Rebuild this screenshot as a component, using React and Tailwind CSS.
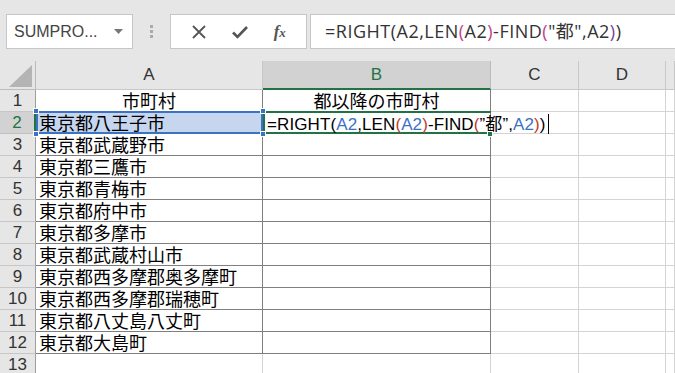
import React from "react";

const data = [
  "東京都八王子市",
  "東京都武蔵野市",
  "東京都三鷹市",
  "東京都青梅市",
  "東京都府中市",
  "東京都多摩市",
  "東京都武蔵村山市",
  "東京都西多摩郡奥多摩町",
  "東京都西多摩郡瑞穂町",
  "東京都八丈島八丈町",
  "東京都大島町",
];

const cellFont = { fontFamily: '"Noto Sans CJK JP", "Noto Sans", sans-serif' };
const uiFont = { fontFamily: '"Liberation Sans", Arial, sans-serif' };

function Toolbar() {
  return (
    <div className="h-[61px] bg-[#e6e6e6] flex items-start pt-[14px] pl-[6px]">
      <div className="w-[127px] h-[35px] bg-white border border-[#c6c6c6] flex items-center justify-between pl-[7px] pr-[9px]">
        <span className="text-[16px] text-[#444]" style={uiFont}>SUMPRO...</span>
        <svg width="9" height="5" viewBox="0 0 9 5"><path d="M0 0h9L4.5 5z" fill="#777" /></svg>
      </div>
      <div className="w-[37px] h-[35px] flex flex-col items-center justify-center gap-[2px]">
        <div className="w-[3px] h-[3px] bg-[#aaa]" />
        <div className="w-[3px] h-[3px] bg-[#aaa]" />
        <div className="w-[3px] h-[3px] bg-[#aaa]" />
      </div>
      <div className="w-[137px] h-[35px] bg-white border border-[#c6c6c6] flex items-center justify-around px-[8px]">
        <svg width="16" height="16" viewBox="0 0 16 16"><path d="M2 2L14 14M14 2L2 14" stroke="#555" strokeWidth="1.8" /></svg>
        <svg width="18" height="16" viewBox="0 0 18 16"><path d="M2 8.5L6.5 13L16 3" stroke="#555" strokeWidth="2.6" fill="none" /></svg>
        <span className="text-[17px] text-[#555] italic font-bold" style={{ fontFamily: '"Liberation Serif", serif' }}>
          f<span className="text-[13px]">x</span>
        </span>
      </div>
      <div className="ml-[3px] flex-1 h-[35px] bg-white border border-[#c6c6c6] border-r-0 flex items-center pl-[14px]">
        <span className="text-[18px] tracking-[0.5px] text-[#333] whitespace-nowrap" style={{ fontFamily: '"Open Sans", "Noto Sans CJK JP", sans-serif' }}>
          =RIGHT(A2,LEN<span className="text-[#c43b8a]">(</span>A2<span className="text-[#c43b8a]">)</span>-FIND<span className="text-[#c43b8a]">(</span>"都",A2<span className="text-[#7b3fa0]">)</span>)
        </span>
      </div>
    </div>
  );
}

const cols = [
  { key: "A", w: "w-[227px]" },
  { key: "B", w: "w-[228px]" },
  { key: "C", w: "w-[88px]" },
  { key: "D", w: "w-[87px]" },
  { key: "E", w: "flex-1" },
];

function HeaderRow() {
  return (
    <div className="flex h-[29px] bg-[#e6e6e6]">
      <div className="w-[36px] h-full border-r border-b border-[#bcbcbc] flex items-end justify-end pr-[3px] pb-[2px]">
        <svg width="23" height="22" viewBox="0 0 23 22"><path d="M23 0V22H0z" fill="#b4b4b4" /></svg>
      </div>
      {cols.map((c) =>
        c.key === "B" ? (
          <div key={c.key} className={`${c.w} h-full bg-[#d2d2d2] border-r border-[#bcbcbc] border-b-2 border-b-[#217346] flex items-center justify-center text-[17px] text-[#217346]`} style={uiFont}>
            {c.key}
          </div>
        ) : (
          <div key={c.key} className={`${c.w} h-full border-r border-b border-[#c8c8c8] flex items-center justify-center text-[17px] text-[#333]`} style={uiFont}>
            {c.key === "E" ? "" : c.key}
          </div>
        )
      )}
    </div>
  );
}

function RowHeader({ n, active }) {
  return active ? (
    <div className="w-[36px] h-full bg-[#d2d2d2] border-b border-[#c0c0c0] border-r-2 border-r-[#217346] flex items-center justify-center text-[17px] text-[#217346]" style={uiFont}>
      {n}
    </div>
  ) : (
    <div className="w-[36px] h-full bg-[#e6e6e6] border-b border-[#c6c6c6] border-r border-r-[#9e9e9e] flex items-center justify-center text-[17px] text-[#333]" style={uiFont}>
      {n}
    </div>
  );
}

function Handle({ className }) {
  return <div className={`absolute w-[6px] h-[6px] bg-[#3a72c4] border border-white z-20 ${className}`} />;
}

function Row({ n, a, b, dark }) {
  const darkCell = "border-r border-b border-[#7f7f7f]";
  const lightCell = "border-r border-b border-[#d4d4d4]";
  return (
    <div className="flex h-[22px]">
      <RowHeader n={n} active={n === 2} />
      <div className={`w-[227px] h-full ${dark ? darkCell : lightCell} relative text-[18px] leading-[21px] text-black whitespace-nowrap ${n === 1 ? "text-center" : "pl-[3px]"}`} style={cellFont}>
        {n === 2 && (
          <>
            <div className="absolute left-0 right-[-1px] top-[-1px] bottom-[-1px] bg-[#c6d6ef] border-2 border-[#3a72c4] z-0" />
            <Handle className="left-[-3px] top-[-4px]" />
            <Handle className="right-[-4px] top-[-4px]" />
            <Handle className="left-[-3px] bottom-[-4px]" />
            <Handle className="right-[-4px] bottom-[-4px]" />
          </>
        )}
        <span className="relative z-10">{a}</span>
      </div>
      <div className={`w-[228px] h-full ${dark ? darkCell : lightCell} relative text-[18px] leading-[21px] text-black whitespace-nowrap ${n === 1 ? "text-center" : ""}`} style={cellFont}>
        {n === 2 ? (
          <>
            <div className="absolute left-0 right-[-1px] top-[-1px] bottom-[-1px] border-t-2 border-b-2 border-l-2 border-[#217346] z-10" />
            <div className="absolute right-[-3px] bottom-[-4px] w-[6px] h-[6px] bg-[#217346] border border-white z-20" />
            <span className="absolute left-[4px] top-[0px] z-10 text-[17px] tracking-[0.1px]" style={{ fontFamily: '"Liberation Sans", "Noto Sans CJK JP", sans-serif' }}>
              =RIGHT(<span className="text-[#3a72c4]">A2</span>,LEN<span className="text-[#c0392b]">(</span><span className="text-[#3a72c4]">A2</span><span className="text-[#c0392b]">)</span>-FIND<span className="text-[#c0392b]">(</span>”<span style={cellFont}>都</span>”,<span className="text-[#3a72c4]">A2</span><span className="text-[#c0392b]">)</span>)
              <span className="inline-block align-middle w-[1px] h-[20px] bg-black ml-[2px] -mt-[3px]" />
            </span>
          </>
        ) : (
          b
        )}
      </div>
      <div className={`w-[88px] h-full ${lightCell}`} />
      <div className={`w-[87px] h-full ${lightCell}`} />
      <div className={`flex-1 h-full ${lightCell}`} />
    </div>
  );
}

export default function App() {
  return (
    <div className="w-[675px] h-[373px] overflow-hidden bg-white">
      <Toolbar />
      <HeaderRow />
      <Row n={1} a="市町村" b="都以降の市町村" dark />
      {data.map((d, i) => (
        <Row key={i} n={i + 2} a={d} b="" dark />
      ))}
      <Row n={13} a="" b="" dark={false} />
    </div>
  );
}
